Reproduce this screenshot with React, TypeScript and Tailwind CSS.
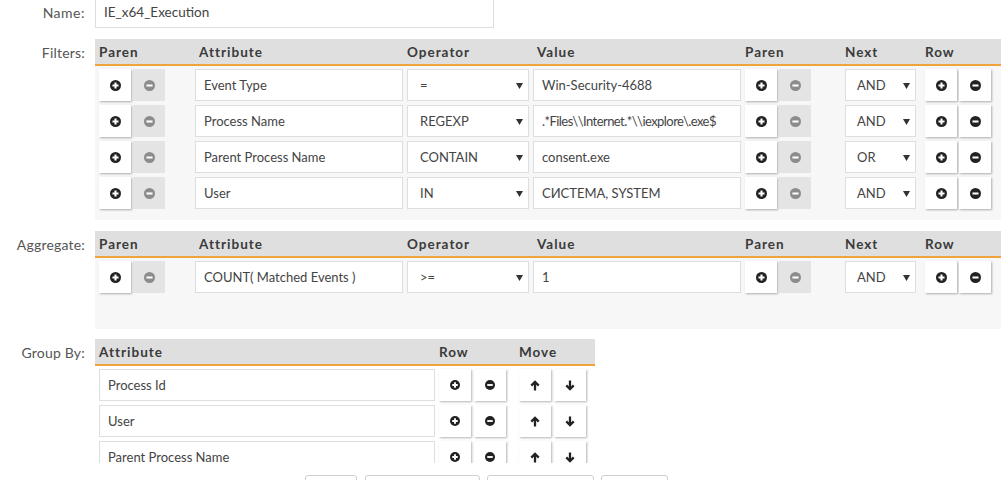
import React from 'react'

type FilterRow = { attr: string; op: string; val: string; next: string }

const FILTERS: FilterRow[] = [
  { attr: 'Event Type', op: '=', val: 'Win-Security-4688', next: 'AND' },
  { attr: 'Process Name', op: 'REGEXP', val: '.*Files\\\\Internet.*\\\\iexplore\\.exe$', next: 'AND' },
  { attr: 'Parent Process Name', op: 'CONTAIN', val: 'consent.exe', next: 'OR' },
  { attr: 'User', op: 'IN', val: 'СИСТЕМА, SYSTEM', next: 'AND' },
]

const GROUP_BY = ['Process Id', 'User', 'Parent Process Name']

const COLS = 'grid grid-cols-[96px_212px_126px_212px_100px_80px_1fr]'

function PlusIcon({ size = 11 }: { size?: number }) {
  return (
    <svg width={size} height={size} viewBox="0 0 16 16">
      <circle cx="8" cy="8" r="8" fill="currentColor" />
      <path d="M8 3.6v8.8M3.6 8h8.8" stroke="white" strokeWidth="3" />
    </svg>
  )
}

function MinusIcon({ size = 11 }: { size?: number }) {
  return (
    <svg width={size} height={size} viewBox="0 0 16 16">
      <circle cx="8" cy="8" r="8" fill="currentColor" />
      <path d="M3.6 8h8.8" stroke="white" strokeWidth="3" />
    </svg>
  )
}

function ArrowIcon({ down = false }: { down?: boolean }) {
  return (
    <svg width="10" height="11" viewBox="0 0 10 11" className={down ? 'rotate-180' : ''}>
      <path d="M5 10.5V2.2M1.3 5.6L5 1.8l3.7 3.8" fill="none" stroke="currentColor" strokeWidth="2.3" />
    </svg>
  )
}

function Btn({ children, disabled = false }: { children: React.ReactNode; disabled?: boolean }) {
  return (
    <div
      className={
        'w-8 h-8 flex items-center justify-center ' +
        (disabled ? 'bg-[#e4e4e4] text-[#8c8c8c]' : 'bg-white text-[#222] shadow-[1px_1px_2px_rgba(0,0,0,0.3)]')
      }
    >
      {children}
    </div>
  )
}

function Input({ value, w, tight = false }: { value: string; w: string; tight?: boolean }) {
  return (
    <div
      className={
        w +
        ' h-8 bg-white border border-[#dedede] pl-2 pt-[1px] flex items-center whitespace-nowrap overflow-hidden text-[#444]' +
        (tight ? ' tracking-[-0.55px]' : '')
      }
    >
      {value}
    </div>
  )
}

function Select({ value, w, pl }: { value: string; w: string; pl: string }) {
  return (
    <div className={w + ' ' + pl + ' h-8 bg-white border border-[#dedede] pr-[5px] pt-[1px] flex items-center justify-between text-[#444]'}>
      <span>{value}</span>
      <svg width="7" height="6" viewBox="0 0 7 6"><path d="M0 0h7L3.5 6z" fill="#333" /></svg>
    </div>
  )
}

function Head({ children }: { children: React.ReactNode }) {
  return <div className="font-bold text-[13.5px] tracking-[1px] text-[#3a3a3a] pt-[1px]">{children}</div>
}

function Label({ text }: { text: string }) {
  return (
    <div className="w-[85px] shrink-0 h-[27px] flex items-center justify-end text-[#555] text-[14px] tracking-[0.2px]">
      {text}
    </div>
  )
}

function ParenPair() {
  return (
    <div className="flex gap-[2px]">
      <Btn><PlusIcon /></Btn>
      <Btn disabled><MinusIcon /></Btn>
    </div>
  )
}

function RowPair() {
  return (
    <div className="flex gap-[2px]">
      <Btn><PlusIcon /></Btn>
      <Btn><MinusIcon /></Btn>
    </div>
  )
}

function ConditionHeader() {
  return (
    <div className={COLS + ' h-[27px] items-center bg-[#dfdfdf] border-b-2 border-[#f0a23b] px-1'}>
      <Head>Paren</Head>
      <div className="pl-1"><Head>Attribute</Head></div>
      <Head>Operator</Head>
      <div className="pl-1"><Head>Value</Head></div>
      <Head>Paren</Head>
      <Head>Next</Head>
      <Head>Row</Head>
    </div>
  )
}

function ConditionRow({ r }: { r: FilterRow }) {
  return (
    <div className={COLS + ' items-center'}>
      <ParenPair />
      <Input value={r.attr} w="w-[208px]" />
      <Select value={r.op} w="w-[122px]" pl="pl-3" />
      <Input value={r.val} w="w-[208px]" tight={r.val.length > 24} />
      <ParenPair />
      <Select value={r.next} w="w-[71px]" pl="pl-[11px]" />
      <RowPair />
    </div>
  )
}

export default function App() {
  return (
    <div className="-mt-1 bg-white font-['Lato','Noto_Sans',sans-serif] text-[13px] h-[484px] overflow-hidden">
      {/* name */}
      <div className="flex gap-[10px] items-center">
        <div className="w-[85px] shrink-0 text-right text-[#555] text-[14px] tracking-[0.5px] pt-[1px]">Name:</div>
        <div className="w-[399px] h-8 border border-[#dedede] pl-2 pt-[1px] flex items-center text-[#444] text-[13.5px]">IE_x64_Execution</div>
      </div>

      {/* filters */}
      <div className="flex gap-[10px] mt-[11px]">
        <Label text="Filters:" />
        <div className="w-[906px]">
          <ConditionHeader />
          <div className="bg-[#f7f7f7] px-1 pt-[3px] pb-[11px] flex flex-col gap-1">
            {FILTERS.map((r, i) => <ConditionRow key={i} r={r} />)}
          </div>
        </div>
      </div>

      {/* aggregate */}
      <div className="flex gap-[10px] mt-[11px]">
        <Label text="Aggregate:" />
        <div className="w-[906px]">
          <ConditionHeader />
          <div className="bg-[#f7f7f7] px-1 pt-[3px] h-[71px]">
            <ConditionRow r={{ attr: 'COUNT( Matched Events )', op: '>=', val: '1', next: 'AND' }} />
          </div>
        </div>
      </div>

      {/* group by */}
      <div className="flex gap-[10px] mt-[10px]">
        <Label text="Group By:" />
        <div className="w-[500px]">
          <div className="grid grid-cols-[340px_80px_1fr] h-[27px] items-center bg-[#dfdfdf] border-b-2 border-[#f0a23b] px-1">
            <Head>Attribute</Head>
            <Head>Row</Head>
            <Head>Move</Head>
          </div>
          <div className="h-[97px] overflow-hidden px-1 pt-[3px] flex flex-col gap-1">
            {GROUP_BY.map((g) => (
              <div key={g} className="grid grid-cols-[340px_80px_1fr] items-center shrink-0">
                <Input value={g} w="w-[336px]" />
                <div className="flex gap-[3px]">
                  <Btn><PlusIcon size={10} /></Btn>
                  <Btn><MinusIcon size={10} /></Btn>
                </div>
                <div className="flex gap-[3px] text-[#333]">
                  <Btn><ArrowIcon /></Btn>
                  <Btn><ArrowIcon down /></Btn>
                </div>
              </div>
            ))}
          </div>
        </div>
      </div>

      {/* actions, only their top edge is in view */}
      <div className="flex mt-3 pl-[305px] gap-[7px]">
        <button aria-label="Test" className="w-[52px] h-8 border border-[#cfcfcf] rounded-[3px] bg-white" />
        <button aria-label="Save" className="w-[115px] h-8 border border-[#cfcfcf] rounded-[3px] bg-white ml-[1px]" />
        <button aria-label="Save As" className="w-[107px] h-8 border border-[#cfcfcf] rounded-[3px] bg-white" />
        <button aria-label="Cancel" className="w-[67px] h-8 border border-[#cfcfcf] rounded-[3px] bg-white" />
      </div>
    </div>
  )
}
